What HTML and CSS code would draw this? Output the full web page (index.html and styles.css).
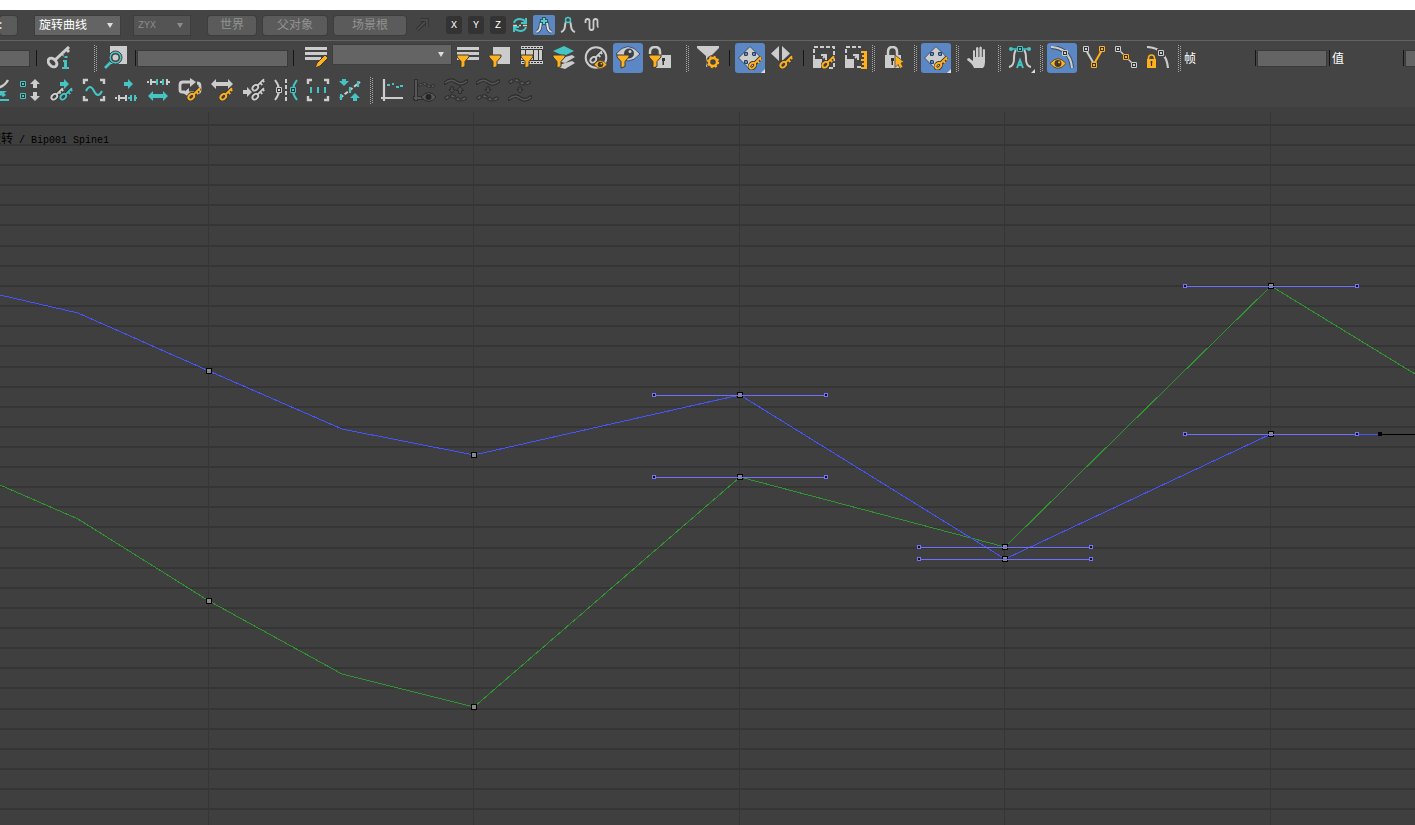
FILE: index.html
```
<!DOCTYPE html>
<html lang="zh-CN">
<head>
  <meta charset="UTF-8">
  <meta name="viewport" content="width=device-width, initial-scale=1.0">
  <title>曲线编辑器</title>
  <link rel="stylesheet" href="styles.css">
</head>
<body>
  <!-- Shared shapes -->
  <svg class="defs">
    <symbol id="key" viewBox="0 0 13 13">
      <path class="edge" d="M5.500 7.500L12 1M8.500 4.500l2 2M10.800 2.200l1.500 1.500"/><ellipse class="edge" cx="4" cy="9" rx="3" ry="2.200" transform="rotate(-45 4 9)"/>
      <path class="ink" d="M5.500 7.500L12 1M8.500 4.500l2 2M10.800 2.200l1.500 1.500"/><ellipse class="ink" cx="4" cy="9" rx="3" ry="2.200" transform="rotate(-45 4 9)"/>
    </symbol>
    <symbol id="funnel" viewBox="0 0 14 15">
      <path d="M1 1h12v2L9 7.500v5L5 14V7.500L1 3z" fill="#ffb01a" stroke="#3a3a3a" stroke-width="1"/>
    </symbol>
    <symbol id="point" viewBox="0 0 6 6">
      <path d="M0 0h6v6H0z" fill="#333"/><path d="M.5.5h5v5h-5z" fill="none" stroke="currentColor" stroke-width="1"/><path d="M2 2h2v2H2z" fill="currentColor"/>
    </symbol>
    <symbol id="moveKey" viewBox="0 0 24 24">
      <path d="M12 .5L23.500 12 12 23.500.5 12z" fill="#ccc" stroke="#354e70"/>
      <path d="M6.500 6.500h3v2.500H9v.5H6.500zM14.500 6.500h3v3H15V9h-.5zM6.500 14.500H9v.5h.5v2.500h-3z" fill="#5b88c4" stroke="#2c405c"/>
      <use href="#key" class="orange" x="10" y="10" width="14" height="14"/>
    </symbol>
    <symbol id="eye" viewBox="0 0 14 9">
      <path d="M0 4.500Q7-4 14 4.500 7 13 0 4.500z" fill="currentColor" stroke="#3a3a3a" stroke-width=".7"/>
      <circle cx="7" cy="4.500" r="3" fill="#40382a"/><circle cx="8" cy="3.500" r="1" fill="currentColor"/>
    </symbol>
    <symbol id="wave" viewBox="0 0 24 9">
      <path d="M1 5Q7 0 12 4t11-1" fill="none" stroke="#2d2d2d" stroke-width="3.600" stroke-linecap="round"/>
      <path d="M1 5Q7 0 12 4t11-1" fill="none" stroke="#575757" stroke-width="1.600"/>
    </symbol>
    <symbol id="dashwave" viewBox="0 0 24 9">
      <path d="M1 5Q7 0 12 4t11-1" fill="none" stroke="#2d2d2d" stroke-width="3.800" stroke-dasharray="5 1"/>
      <path d="M1 5Q7 0 12 4t11-1" fill="none" stroke="#606060" stroke-width="1.800" stroke-dasharray="3 3" stroke-dashoffset="-1"/>
    </symbol>
    <symbol id="smallDown" viewBox="0 0 8 9"><path d="M2.500 1h3v3h2L4 8 .5 4h2z" fill="#4c4c4c" stroke="#2b2b2b"/></symbol>
  </svg>

  <div class="topstrip"></div>

  <header class="toolbars">
    <!-- Biped bar -->
    <div class="bar bar-biped">
      <button class="btn btn-first">:</button>
      <label class="drop drop-curve"><select aria-label="曲线类型"><option>旋转曲线</option></select></label>
      <label class="drop drop-order off"><select aria-label="轴顺序" disabled><option>ZYX</option></select></label>
      <div class="spaces">
        <button class="btn btn-world" disabled>世界</button>
        <button class="btn btn-parent" disabled>父对象</button>
        <button class="btn btn-root" disabled>场景根</button>
      </div>
      <button class="mini" aria-label="拾取" disabled><svg viewBox="0 0 20 20"><path d="M5 15l8-8M8 5h7v7" fill="none" stroke="#303030" stroke-width="3.500"/><path d="M5 15l8-8M8 5h7v7" fill="none" stroke="#515151" stroke-width="1.500"/></svg></button>
      <div class="axes">
        <button class="axis">X</button>
        <button class="axis">Y</button>
        <button class="axis">Z</button>
      </div>
      <div class="minis">
        <button class="mini" aria-label="循环"><svg viewBox="0 0 20 20"><g fill="none" stroke="#45c4c4" stroke-width="2"><path d="M4 8q1-4 6-4 3 0 6 3M16 3v5h-5M16 12q-1 4-6 4-3 0-6-3M4 17v-5h5"/></g><path d="M3 10.500h4M9 10.500h2M13 10.500h4" stroke="#ccc" stroke-width="1.500"/></svg></button>
        <button class="mini on" aria-label="设置关键点"><svg viewBox="0 0 20 20"><path d="M2.500 17q3.500-1 4-6t2-5M17.500 17q-3.500-1-4-6t-2-5" fill="none" stroke="#3a4a60" stroke-width="3.600"/><path d="M2.500 17q3.500-1 4-6t2-5M17.500 17q-3.500-1-4-6t-2-5" fill="none" stroke="#ddd" stroke-width="2"/><path d="M10 2v8M6 6h8" stroke="#315664" stroke-width="4"/><path d="M10 3v6M7 6h6" stroke="#4fd2cc" stroke-width="2"/></svg></button>
        <button class="mini" aria-label="TCB"><svg viewBox="0 0 20 20"><path d="M3 17q3.500-1 4-6t1.500-4M17 17q-3.500-1-4-6t-1.500-4" fill="none" stroke="#ccc" stroke-width="2"/><circle cx="10" cy="5" r="2.500" fill="#444" stroke="#45c4c4" stroke-width="1.500"/></svg></button>
        <button class="mini" aria-label="波形"><svg viewBox="0 0 20 20"><path d="M3.500 8v-2q0-2 2-2t2 2v7q0 2 2 2t2-2V6q0-2 2-2t2 2v4q0 2 1 2" fill="none" stroke="#ccc" stroke-width="1.800"/></svg></button>
      </div>
    </div>

    <!-- Track bar -->
    <div class="bar bar-track">
      <input class="field field-cut" type="text" aria-label="编号">
      <i class="line line-a"></i>
      <button class="tool" aria-label="关键点信息"><svg viewBox="0 0 24 24"><path d="M8 14L22 1M15 7l4 4M19 3l3 3" stroke="#ccc" stroke-width="3"/><ellipse cx="5.500" cy="16.500" rx="5" ry="3.500" transform="rotate(45 5.500 16.500)" fill="none" stroke="#ccc" stroke-width="3"/><path d="M17 12h4v9h3M15 21h6M16 15.500h5M18.500 9.500h3v3h-3z" fill="none" stroke="#444" stroke-width="4"/><path d="M17.500 10h3v2h-3zM16 14h4v7h2v2h-7v-2h2v-5h-1z" fill="#45c4c4"/></svg></button>
      <i class="dots dots-far"></i>
      <button class="tool" aria-label="缩放选定对象"><svg viewBox="0 0 24 24"><path d="M6 0h17v18H6z" fill="#ccc"/><path d="M1 22l7-7" stroke="#45c4c4" stroke-width="2.600"/><circle cx="11.500" cy="11.500" r="6.500" fill="#45c4c4" stroke="#444"/><circle cx="11.500" cy="11.500" r="3.800" fill="#ccc" stroke="#444" stroke-width="1.600"/></svg></button>
      <i class="line"></i>
      <input class="field field-name" type="text" aria-label="名称">
      <i class="line line-b"></i>
      <button class="tool" aria-label="编辑轨迹集"><svg viewBox="0 0 24 24"><path d="M1 1h22v3H1zM1 6h22v3H1zM1 11h16v3H1z" fill="#ccc"/><path d="M11 22l2-5 8-8 3 3-8 8z" fill="#ffb01a" stroke="#3a3a3a"/></svg></button>
      <label class="drop drop-set"><select aria-label="轨迹集"><option></option></select></label>
      <button class="tool" aria-label="过滤列表"><svg viewBox="0 0 24 24"><path d="M1 1h22v3H1zM1 6h22v3H1zM1 11h22v3H1z" fill="#ccc"/><use href="#funnel" x="0" y="8" width="14" height="15"/></svg></button>
      <button class="tool" aria-label="过滤对象"><svg viewBox="0 0 24 24"><path d="M5 1h17v17H5z" fill="#ccc"/><use href="#funnel" x="0" y="8" width="14" height="15"/></svg></button>
      <button class="tool" aria-label="过滤动画"><svg viewBox="0 0 24 24"><path d="M1 0h22v18H1z" fill="#ccc"/><path d="M2 1.500h20M2 16.500h20" stroke="#333" stroke-dasharray="2 1"/><path d="M.5 3.500h5v11h-5zM5.500 3.500h8v11h-8zM13.500 3.500h5v11h-5zM18.500 3.500h4v11h-4z" fill="#ccc" stroke="#333"/><use href="#funnel" x="0" y="8" width="14" height="15"/></svg></button>
      <button class="tool" aria-label="过滤层"><svg viewBox="0 0 24 24"><path d="M1 5l11-5 10 5-10 5z" fill="#45c4c4"/><path d="M10 12l10-3 3 2-10 6-7-2zM10 18l10-3 3 2-10 6-7-2z" fill="#ccc"/><use href="#funnel" x="0" y="8" width="14" height="15"/></svg></button>
      <button class="tool" aria-label="可设关键点"><svg viewBox="0 0 24 24"><circle cx="12" cy="11.500" r="10.300" fill="none" stroke="#ccc" stroke-width="2"/><use href="#key" class="light" x="5" y="4" width="14" height="14"/><use href="#eye" class="orange" x="10" y="14" width="13" height="9"/></svg></button>
      <button class="tool on" aria-label="可见对象"><svg viewBox="0 0 24 24"><path d="M0 8Q12-7 24 8 12 22 0 8z" fill="#ccc" stroke="#354e70"/><circle cx="13" cy="7.500" r="5" fill="#3b414a"/><circle cx="14" cy="5.500" r="1.500" fill="#ccc"/><use href="#funnel" x="0" y="8" width="14" height="15"/></svg></button>
      <button class="tool" aria-label="未锁定属性"><svg viewBox="0 0 24 24"><path d="M2 8V6q0-5 5-5t5 5v5" fill="none" stroke="#ccc" stroke-width="2.500"/><path d="M8 9h15v13H8z" fill="#ccc"/><path d="M14 12h3v3h-1v4h-1.500v-4H14z" fill="#333"/><use href="#funnel" x="0" y="8" width="14" height="15"/></svg></button>
      <i class="dots dots-near"></i>
      <button class="tool" aria-label="过滤器"><svg viewBox="0 0 24 24"><path d="M1 0h22v2l-8 8v9l-5 2V10L1 2z" fill="#ccc"/><circle cx="17" cy="16" r="7" fill="#444"/><circle cx="17" cy="16" r="4" fill="none" stroke="#ffb01a" stroke-width="2.400"/><circle cx="17" cy="16" r="5.300" fill="none" stroke="#ffb01a" stroke-width="1.800" stroke-dasharray="2 2.160"/></svg></button>
      <i class="line line-c"></i>
      <button class="tool on fly" aria-label="移动关键点"><svg viewBox="0 0 24 24"><use href="#moveKey" width="24" height="24"/></svg></button>
      <button class="tool" aria-label="滑动关键点"><svg viewBox="0 0 24 24"><path d="M9 0v15L1 7.500zM12 0v15l8-7.500z" fill="#ccc"/><use href="#key" class="orange" x="9" y="9" width="14" height="14"/></svg></button>
      <i class="line line-c"></i>
      <button class="tool" aria-label="缩放关键点"><svg viewBox="0 0 24 24"><path d="M2 13V1h20v21h-9" fill="none" stroke="#ccc" stroke-width="2" stroke-dasharray="4 2"/><path d="M1 13h9v9H1z" fill="#ccc"/><path d="M9 9h5v5M14 9l-3 3" fill="none" stroke="#ccc" stroke-width="2"/><use href="#key" class="orange" x="9" y="9" width="14" height="14"/></svg></button>
      <button class="tool" aria-label="缩放值"><svg viewBox="0 0 24 24"><path d="M2 13V1h15M13 21h5" fill="none" stroke="#ccc" stroke-width="2" stroke-dasharray="4 2"/><path d="M1 13h9v9H1z" fill="#ccc"/><path d="M9 9h5v5M14 9l-3 3" fill="none" stroke="#ccc" stroke-width="2"/><path d="M17 5h6v18h-6v-2h3v-2h-2v-2h2v-2h-3v-2h3v-2h-2V9h2V7h-3z" fill="#ffb01a"/></svg></button>
      <i class="dots dots-slim"></i>
      <button class="tool" aria-label="锁定选择"><svg viewBox="0 0 24 24"><path d="M6 10V6q0-5 4.500-5T15 6v4" fill="none" stroke="#ccc" stroke-width="2.500"/><path d="M3 9h16v13H3z" fill="#ccc"/><path d="M9 12h3v3h-1v4H9.500v-4H9z" fill="#333"/><path d="M13 9l9 7-3 1 2 4-3 1.500-2-4-3 3z" fill="#ffb01a" stroke="#444" stroke-width=".8"/></svg></button>
      <i class="dots"></i>
      <button class="tool on fly" aria-label="移动关键点"><svg viewBox="0 0 24 24"><use href="#moveKey" width="24" height="24"/></svg></button>
      <i class="dots"></i>
      <button class="tool" aria-label="平移"><svg viewBox="0 0 24 24"><path d="M8 22q-2-5-7-8 0-2 2-2l4 3V5q1-2 2 0v6h1V2q1.200-2 2.400 0v9h1V1.500q1.200-2 2.400 0V11h1V4q1.200-1.800 2.200 0v12q0 4-2 6z" fill="#ccc"/></svg></button>
      <i class="dots"></i>
      <button class="tool fly" aria-label="自动切线"><svg viewBox="0 0 24 24"><path d="M1 21q5-1 5-8t2-9M23 21q-5-1-5-8t-2-9" fill="none" stroke="#ccc" stroke-width="2"/><path d="M3 3h18" stroke="#45c4c4" stroke-width="1.500"/><circle cx="3" cy="3" r="2" fill="#45c4c4"/><circle cx="21" cy="3" r="2" fill="#45c4c4"/><use href="#point" class="teal" x="9" y="0" width="6" height="6"/><path d="M9 22l3-8 3 8M10 19h4" fill="none" stroke="#45c4c4" stroke-width="2"/></svg></button>
      <i class="dots"></i>
      <button class="tool on" aria-label="显示切线"><svg viewBox="0 0 24 24"><path d="M1 1q19 1 21 21" fill="none" stroke="#3a4a60" stroke-width="4"/><path d="M1 1q19 1 21 21" fill="none" stroke="#ccc" stroke-width="2.200"/><use href="#point" class="light" x="12" y="4" width="6" height="6"/><use href="#eye" class="orange" x="0" y="12" width="16" height="11"/></svg></button>
      <button class="tool" aria-label="断开切线"><svg viewBox="0 0 24 24"><path d="M4 4l8 14" stroke="#ccc" stroke-width="2"/><path d="M12 18l8-14" stroke="#ffb01a" stroke-width="2"/><use href="#point" class="light" x="1" y="0" width="6" height="6"/><use href="#point" class="orange" x="17" y="0" width="6" height="6"/><use href="#point" class="orange" x="9" y="16" width="6" height="6"/></svg></button>
      <button class="tool" aria-label="统一切线"><svg viewBox="0 0 24 24"><path d="M4 3l16 16" stroke="#ccc" stroke-width="1.500"/><use href="#point" class="light" x="1" y="0" width="6" height="6"/><use href="#point" class="orange" x="9" y="8" width="6" height="6"/><use href="#point" class="light" x="17" y="16" width="6" height="6"/></svg></button>
      <button class="tool" aria-label="锁定切线"><svg viewBox="0 0 24 24"><path d="M1 1q19 1 21 21" fill="none" stroke="#ccc" stroke-width="2.200"/><path d="M11 3h8v8h-8z" fill="#444"/><use href="#point" class="light" x="12" y="4" width="6" height="6"/><path d="M2.500 13v-1q0-3 3-3t3 3v3" fill="none" stroke="#ffb01a" stroke-width="1.600"/><path d="M1 13h9v9H1z" fill="#ffb01a"/><path d="M5.500 15v5M4.500 16h2" stroke="#333" stroke-width="1.200"/></svg></button>
      <i class="dots"></i>
      <label class="caption" for="frame">帧</label>
      <i class="line"></i>
      <input class="field field-num" id="frame" type="text">
      <i class="line"></i>
      <label class="caption" for="value">值</label>
      <i class="line"></i>
      <input class="field field-num" id="value" type="text">
    </div>

    <!-- Key tools bar -->
    <div class="bar bar-keys">
      <button class="tool" aria-label="绘制曲线"><svg viewBox="0 0 24 24"><path d="M6 10q11 1 16-8" fill="none" stroke="#ccc" stroke-width="2.400"/><path d="M5 22h18" fill="none" stroke="#45c4c4" stroke-width="2"/><path d="M12 13h9l-3 2 2 2-3 2-2-2-3 3z" fill="#45c4c4"/></svg></button>
      <button class="tool" aria-label="移动上下"><svg viewBox="0 0 24 24"><use href="#point" class="teal" x="2" y="3" width="6" height="6"/><use href="#point" class="teal" x="2" y="15" width="6" height="6"/><path d="M17 1l5 5h-3v4h-4V6h-3zM17 23l-5-5h3v-4h4v4h3z" fill="#ccc"/></svg></button>
      <button class="tool" aria-label="复制关键点"><svg viewBox="0 0 24 24"><path d="M10 4h4V1l5 5-5 5V8h-4z" fill="#45c4c4"/><use href="#key" class="light" x="0" y="9" width="14" height="14"/><use href="#key" class="teal" x="9" y="9" width="14" height="14"/></svg></button>
      <button class="tool" aria-label="区域曲线"><svg viewBox="0 0 24 24"><path d="M2 6V2h4M18 2h4v4M22 18v4h-4M6 22H2v-4" fill="none" stroke="#ccc" stroke-width="2.400"/><path d="M4 13q4-8 8 0t8 0" fill="none" stroke="#45c4c4" stroke-width="2"/></svg></button>
      <button class="tool" aria-label="插入时间"><svg viewBox="0 0 24 24"><path d="M10 4h4V1l5 5-5 5V8h-4z" fill="#45c4c4"/><path d="M1 20h2M5 17v6M6 20h5M12 17v6" stroke="#ccc" stroke-width="2"/><path d="M14 20h2M17 17v6M21 17v6M22 20h1" stroke="#45c4c4" stroke-width="2"/></svg></button>
      <button class="tool" aria-label="缩放时间"><svg viewBox="0 0 24 24"><path d="M1 4h2M5 1v6M6 4h4M14 4h2M21 1v6M22 4h2" stroke="#ccc" stroke-width="2"/><path d="M11 1v6M17 1v6" stroke="#45c4c4" stroke-width="2"/><path d="M2 18l5-5v3h10v-3l5 5-5 5v-3H7v3z" fill="#45c4c4"/></svg></button>
      <button class="tool" aria-label="循环关键点"><svg viewBox="0 0 24 24"><path d="M7 14H4q-2 0-2-2V7q0-3 3-3h9M19 5q3 0 3 3v4q0 3-3 3H9" fill="none" stroke="#ccc" stroke-width="2.800"/><path d="M12 0l6 4-6 5zM11 10l-6 5 6 4z" fill="#ccc"/><use href="#key" class="orange" x="9" y="9" width="14" height="14"/></svg></button>
      <button class="tool" aria-label="拉伸关键点"><svg viewBox="0 0 24 24"><path d="M1 6l5-5v3h12V1l5 5-5 5V8H6v3z" fill="#ccc"/><use href="#key" class="orange" x="9" y="9" width="14" height="14"/></svg></button>
      <button class="tool" aria-label="合并关键点"><svg viewBox="0 0 24 24"><path d="M1 12h4V9l5 5-5 5v-3H1z" fill="#ccc"/><use href="#key" class="light" x="9" y="0" width="14" height="14"/><use href="#key" class="light" x="9" y="9" width="14" height="14"/></svg></button>
      <button class="tool" aria-label="镜像"><svg viewBox="0 0 24 24"><path d="M1 2q8 10 0 20" fill="none" stroke="#ccc" stroke-width="2"/><path d="M23 2q-8 10 0 20" fill="none" stroke="#45c4c4" stroke-width="2"/><path d="M12 1v22" stroke="#ccc" stroke-width="2" stroke-dasharray="4 2"/><use href="#point" class="light" x="2" y="9" width="6" height="6"/><use href="#point" class="teal" x="16" y="9" width="6" height="6"/></svg></button>
      <button class="tool" aria-label="区域关键点"><svg viewBox="0 0 24 24"><path d="M2 6V2h4M18 2h4v4M22 18v4h-4M6 22H2v-4" fill="none" stroke="#ccc" stroke-width="2.400"/><path d="M5 9v6M12 9v6M19 9v6" stroke="#45c4c4" stroke-width="2"/></svg></button>
      <button class="tool" aria-label="简化曲线"><svg viewBox="0 0 24 24"><path d="M2 20L22 4" stroke="#ccc" stroke-width="2.200" stroke-dasharray="4 2"/><path d="M3 16v6M12 9v6M20 3v6" stroke="#45c4c4" stroke-width="2.200"/><path d="M4 1h4v2h3L6 8 1 3h3zM15 23v-3h-3l5-5 5 5h-3v3z" fill="#45c4c4"/></svg></button>
      <i class="dots"></i>
      <button class="tool" aria-label="缓冲区曲线"><svg viewBox="0 0 24 24"><path d="M4 1v22M1 20h22" stroke="#ccc" stroke-width="2.200"/><path d="M7 7h3M12 6h2M16 9h3M20 8h3" stroke="#45c4c4" stroke-width="2"/></svg></button>
      <button class="tool" aria-label="显示缓冲区" disabled><svg viewBox="0 0 24 24"><path d="M4 1v22M1 20h14" stroke="#2d2d2d" stroke-width="4"/><path d="M4 2v20M2 20h13" stroke="#575757" stroke-width="2"/><use href="#dashwave" x="6" y="4" width="18" height="7"/><path d="M9 19q8-9 15 0-7 9-15 0z" fill="#575757" stroke="#292929"/><circle cx="16.500" cy="19" r="3" fill="#242424"/></svg></button>
      <button class="tool" aria-label="交换曲线" disabled><svg viewBox="0 0 24 24"><use href="#wave" y="0" width="24" height="9"/><use href="#smallDown" x="4" y="8" width="8" height="8"/><path d="M14.500 15.500v-3h-2L16 8.500l3.500 4h-2v3z" fill="#4c4c4c" stroke="#2b2b2b"/><use href="#dashwave" y="16" width="24" height="9"/></svg></button>
      <button class="tool" aria-label="快照" disabled><svg viewBox="0 0 24 24"><use href="#wave" y="0" width="24" height="9"/><use href="#smallDown" x="8" y="8" width="8" height="8"/><use href="#dashwave" y="16" width="24" height="9"/></svg></button>
      <button class="tool" aria-label="还原" disabled><svg viewBox="0 0 24 24"><use href="#dashwave" y="0" width="24" height="9"/><use href="#smallDown" x="8" y="8" width="8" height="8"/><use href="#wave" y="16" width="24" height="9"/></svg></button>
    </div>
  </header>

  <!-- Curve view -->
  <main class="graph">
    <div class="track-name"><span class="track-type">旋转</span> / Bip001 Spine1</div>
    <svg class="curves">
      <defs>
        <g id="knot"><path d="M-3-3h6v6h-6z" fill="#000"/><path d="M-2-2h4v4h-4z" fill="#888"/></g>
        <g id="tan"><path d="M-86 .5H86" stroke="#6e6eff"/><path d="M-88-2h4v4h-4zM84-2h4v4h-4z" fill="#7373ff"/><path d="M-87-1h2v2h-2zM85-1h2v2h-2z" fill="#111"/></g>
      </defs>
      <path class="grid" d="M0 18h4000M0 38h4000M0 58h4000M0 78h4000M0 98h4000M0 118h4000M0 139h4000M0 159h4000M0 179h4000M0 199h4000M0 219h4000M0 239h4000M0 260h4000M0 280h4000M0 300h4000M0 320h4000M0 340h4000M0 360h4000M0 380h4000M0 400h4000M0 420h4000M0 441h4000M0 461h4000M0 481h4000M0 501h4000M0 521h4000M0 541h4000M0 561h4000M0 581h4000M0 602h4000M0 622h4000M0 642h4000M0 662h4000M0 682h4000M0 702h4000"/>
      <path class="grid-v" d="M208.500 5v4000M473.500 5v4000M739.500 5v4000M1004.500 5v4000M1270.500 5v4000"/>
      <polyline class="curve green" points="0,378 78,412 209,494 342,567 474,600 740,370 1005,440 1070,376 1271,179 1415,267"/>
      <polyline class="curve blue" points="0,188 78,206 209,264 342,322 474,348 695,298 740,288 1005,452 1271,327"/>
      <path d="M1271 327.500h109" stroke="#4455ff"/>
      <path d="M1380 327.500h4000" stroke="#000"/>
      <path d="M1378 325h4v4h-4z"/>
      <use href="#knot" x="209" y="264"/><use href="#knot" x="474" y="348"/>
      <use href="#knot" x="209" y="494"/><use href="#knot" x="474" y="600"/>
      <use href="#knot" x="740" y="288"/><use href="#tan" x="740" y="288"/>
      <use href="#knot" x="740" y="370"/><use href="#tan" x="740" y="370"/>
      <use href="#knot" x="1005" y="440"/><use href="#tan" x="1005" y="440"/>
      <use href="#knot" x="1005" y="452"/><use href="#tan" x="1005" y="452"/>
      <use href="#knot" x="1271" y="179"/><use href="#tan" x="1271" y="179"/>
      <use href="#knot" x="1271" y="327"/><use href="#tan" x="1271" y="327"/>
    </svg>
  </main>
</body>
</html>
```
FILE: styles.css
```
:root {
  --bar: #444444;
  --field: #646464;
  --light: #cccccc;
  --teal: #45c4c4;
  --orange: #ffb01a;
}

* { box-sizing: border-box; }

body {
  margin: 0;
  min-height: 100vh;
  display: flex;
  flex-direction: column;
  background: #3f3f3f;
  color: #ffffff;
  font-family: "Liberation Mono", "Noto Sans CJK SC", monospace;
  font-size: 12px;
  overflow: hidden;
}

button, input, select {
  margin: 0;
  padding: 0;
  border: 0;
  font: inherit;
  color: inherit;
}

.defs {
  position: absolute;
  width: 0;
  height: 0;
}

.light { color: var(--light); }
.teal { color: var(--teal); }
.orange { color: var(--orange); }

.edge { fill: none; stroke: #383838; stroke-width: 3.4; }
.ink { fill: none; stroke: currentColor; stroke-width: 1.8; }

.topstrip {
  height: 10px;
  background: #ffffff;
}

.toolbars { background: var(--bar); }

.bar {
  display: flex;
  align-items: center;
  overflow: hidden;
}

.bar > * { flex-shrink: 0; }

/* biped bar */
.bar-biped {
  height: 31px;
  border-bottom: 1px solid #626262;
}

.btn {
  height: 19px;
  line-height: 20px;
  border-radius: 3px;
  background: #5b5b5b;
  box-shadow: 0 0 0 1px #3d3d3d;
}

.btn:disabled { color: #929292; }

.btn-first {
  width: 17px;
  text-align: left;
  color: #dddddd;
  text-indent: -3px;
}

.btn-world { width: 48px; }
.btn-parent { width: 64px; }
.btn-root { width: 72px; }

.drop {
  position: relative;
  display: block;
  height: 19px;
}

.drop select {
  display: block;
  appearance: none;
  width: 100%;
  height: 100%;
  padding: 1px 4px 0;
  border-radius: 0;
  background: var(--field);
  box-shadow: 0 0 0 1px #3d3d3d;
  opacity: 1;
}

.drop::after {
  content: "";
  position: absolute;
  right: 7px;
  top: 7px;
  border: 3px solid transparent;
  border-top: 5px solid #dddddd;
  border-bottom: 0;
}

.drop.off select {
  background: #545454;
  color: #8c8c8c;
  font-size: 10px;
}

.drop.off::after { border-top-color: #8c8c8c; }

.drop-curve {
  width: 85px;
  margin-left: 18px;
}

.drop-order {
  width: 56px;
  margin-left: 14px;
}

.drop-set {
  width: 118px;
  margin: 2px 1px 0;
  align-self: flex-start;
}

.spaces {
  display: flex;
  gap: 7px;
  margin: 0 5px 0 18px;
}

.axes {
  display: flex;
  gap: 6px;
  margin: 0 3px 0 13px;
}

.axis {
  width: 16px;
  height: 18px;
  border-radius: 3px;
  background: #333333;
  font-size: 10px;
  line-height: 20px;
}

.minis {
  display: flex;
  gap: 2px;
}

.mini {
  width: 22px;
  height: 20px;
  border-radius: 2px;
  background: none;
}

.mini svg {
  display: block;
  width: 20px;
  height: 20px;
  margin: 0 auto;
}

.mini.on, .tool.on { background: #5b88c4; }

/* icon bars */
.bar-track, .bar-keys {
  padding-bottom: 2px;
}

.bar-track { padding-top: 2px; }

.bar-keys .tool:first-child { margin-left: -17px; }

.tool {
  position: relative;
  width: 30px;
  height: 30px;
  margin: 0 1px;
  border-radius: 3px;
  background: none;
}

.tool svg {
  display: block;
  width: 24px;
  height: 24px;
  margin: 0 auto;
}

.fly::after {
  content: "";
  position: absolute;
  right: 0;
  bottom: 0;
  border: 2px solid #dddddd;
  border-top-color: transparent;
  border-left-color: transparent;
}

.field {
  height: 15px;
  background: var(--field);
  box-shadow: 0 0 0 1px #3a3a3a;
}

.field-cut { width: 29px; }
.field-name { width: 149px; }
.field-num { width: 68px; }

.line {
  width: 6px;
  height: 16px;
  background: linear-gradient(#151515, #151515) center / 1px 100% no-repeat;
}

.line-a { width: 14px; }
.line-b { width: 13px; }
.line-c { width: 10px; }

.dots {
  width: 10px;
  height: 27px;
  background:
    repeating-linear-gradient(#a8a8a8 0 1px, transparent 1px 2px) 4px 0 / 1px 100% no-repeat,
    repeating-linear-gradient(#a8a8a8 0 1px, transparent 1px 2px) 6px 1px / 1px 100% no-repeat;
}

.dots-far { margin-left: 15px; }
.dots-near { margin-left: 6px; }
.dots-slim { width: 6px; background-position: 0 0, 2px 1px; }

.caption { width: 68px; }

/* curve view */
.graph {
  position: relative;
  flex: 1;
  display: flex;
  min-height: 718px;
}

.curves {
  flex: 1;
  width: 100%;
  shape-rendering: crispEdges;
}

.grid { stroke: #353535; stroke-width: 2; }
.grid-v { stroke: #353535; }
.curve { fill: none; stroke-width: 1; }
.green { stroke: #2f962f; }
.blue { stroke: #4455ff; }

.track-name {
  position: absolute;
  left: -11px;
  top: 24px;
  color: #000000;
  font-size: 10px;
  line-height: 18px;
  white-space: nowrap;
}

.track-type { font-size: 12px; }
```
